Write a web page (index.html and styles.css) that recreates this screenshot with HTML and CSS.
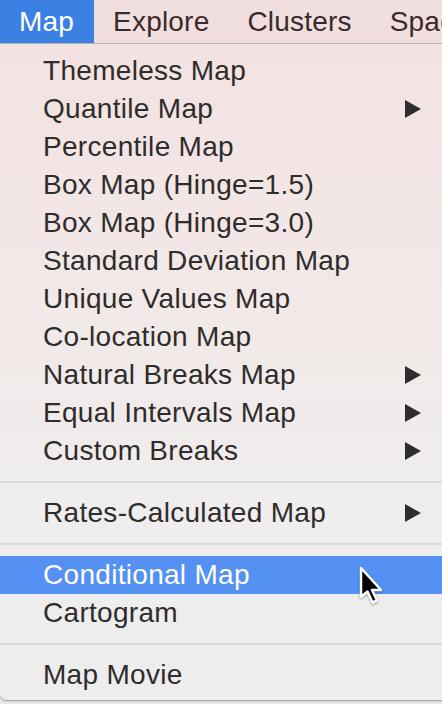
FILE: index.html
```html
<!DOCTYPE html>
<html>
<head>
<meta charset="utf-8">
<link rel="stylesheet" href="styles.css">
</head>
<body>
<div class="screen">
  <div class="menubar">
    <div class="bar-item active">Map</div>
    <div class="bar-item">Explore</div>
    <div class="bar-item">Clusters</div>
    <div class="bar-item">Space</div>
  </div>
  <div class="menu">
    <div class="row">Themeless Map</div>
    <div class="row">Quantile Map<svg class="arrow" viewBox="0 0 17 19"><polygon points="0,0 17,9.5 0,19"/></svg></div>
    <div class="row">Percentile Map</div>
    <div class="row">Box Map (Hinge=1.5)</div>
    <div class="row">Box Map (Hinge=3.0)</div>
    <div class="row">Standard Deviation Map</div>
    <div class="row">Unique Values Map</div>
    <div class="row">Co-location Map</div>
    <div class="row">Natural Breaks Map<svg class="arrow" viewBox="0 0 17 19"><polygon points="0,0 17,9.5 0,19"/></svg></div>
    <div class="row">Equal Intervals Map<svg class="arrow" viewBox="0 0 17 19"><polygon points="0,0 17,9.5 0,19"/></svg></div>
    <div class="row">Custom Breaks<svg class="arrow" viewBox="0 0 17 19"><polygon points="0,0 17,9.5 0,19"/></svg></div>
    <div class="sep"></div>
    <div class="row">Rates-Calculated Map<svg class="arrow" viewBox="0 0 17 19"><polygon points="0,0 17,9.5 0,19"/></svg></div>
    <div class="sep"></div>
    <div class="row selected">Conditional Map
      <svg class="cursor" viewBox="0 0 28 42" width="28" height="42"><polygon points="3,3 3,32 9.5,26.5 14.5,37.5 19,35.5 14,25 23,25" fill="#000" stroke="#fff" stroke-width="2.5" stroke-linejoin="round"/></svg>
    </div>
    <div class="row">Cartogram</div>
    <div class="sep"></div>
    <div class="row">Map Movie</div>
  </div>
</div>
</body>
</html>
```

FILE: styles.css
```css
html, body {
  margin: 0;
  padding: 0;
}
body {
  background: #e9e8e8;
  font-family: "Liberation Sans", Arial, sans-serif;
  width: 442px;
  height: 704px;
  overflow: hidden;
}
.screen {
  width: 442px;
  height: 704px;
  overflow: hidden;
}
.menubar {
  display: flex;
  height: 43px;
  border-bottom: 1px solid #bdb5b5;
  background: #f1dede;
  white-space: nowrap;
  overflow: hidden;
}
.bar-item {
  padding: 1px 19px 0 19px;
  line-height: 42px;
  font-size: 28px;
  color: #3a2b2b;
  letter-spacing: 0.2px;
}
.bar-item.active {
  background: #3d80e4;
  color: #fff;
  padding-left: 19px;
  padding-right: 20px;
}
.menu {
  width: 460px;
  padding: 8px 0 6px 0;
  background: linear-gradient(180deg, #f3e2e2 0%, #f2e9e8 40%, #efeded 70%, #eeeded 100%);
  border-radius: 0 0 7px 7px;
  box-shadow: 0 1px 2px rgba(0,0,0,0.35);
}
.row {
  position: relative;
  height: 38px;
  line-height: 38px;
  font-size: 28px;
  letter-spacing: 0.3px;
  color: #2f2c2c;
  padding-left: 43px;
  white-space: nowrap;
}
.row.selected {
  background: #5591f2;
  color: #fff;
}
.arrow {
  position: absolute;
  left: 405px;
  top: 10px;
  width: 16px;
  height: 18px;
  fill: #2f2c2c;
}
.cursor {
  position: absolute;
  left: 358px;
  top: 9px;
  filter: drop-shadow(0 1px 1px rgba(0,0,0,0.35));
}
.sep {
  height: 2px;
  margin: 11px 0;
  background: #dedad9;
}
```
